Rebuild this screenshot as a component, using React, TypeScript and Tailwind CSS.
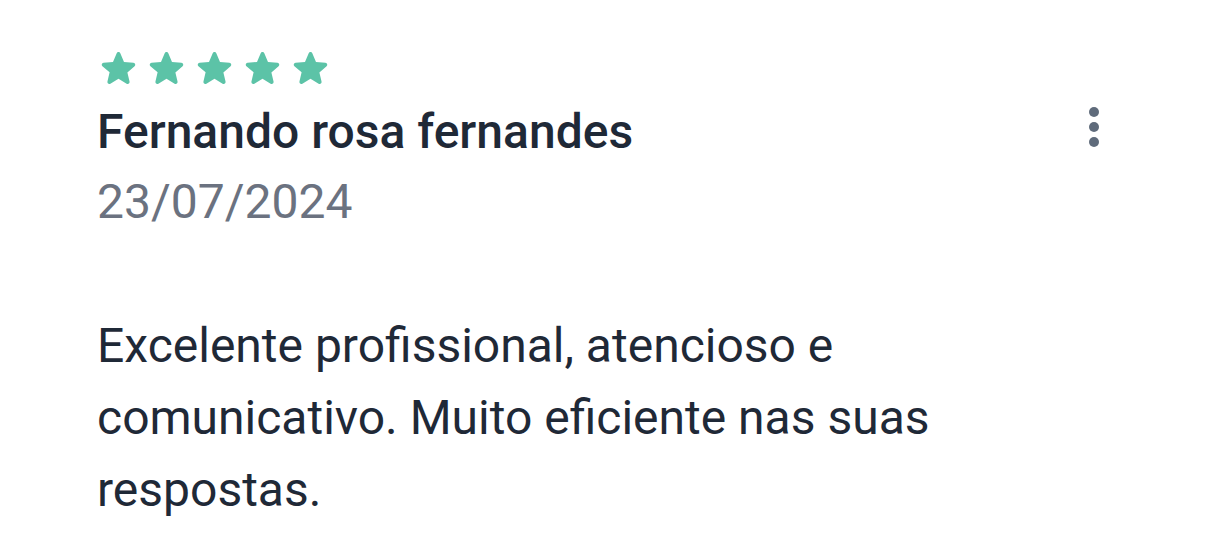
import React from "react";

const Star = () => (
  <svg width="47" height="47" viewBox="0 0 24 24" className="shrink-0">
    <path
      d="M12 17.27l4.15 2.51c.76.46 1.69-.22 1.49-1.08l-1.1-4.72 3.67-3.18c.67-.58.31-1.68-.57-1.75l-4.83-.41-1.89-4.46c-.34-.81-1.5-.81-1.84 0L9.19 8.63l-4.83.41c-.88.07-1.24 1.17-.57 1.75l3.67 3.18-1.1 4.72c-.2.86.73 1.54 1.49 1.08l4.15-2.5z"
      fill="#5cc3a7"
    />
  </svg>
);

export default function App() {
  return (
    <div
      className="w-[1220px] h-[547px] bg-white overflow-hidden"
      style={{ fontFamily: "Roboto, 'Noto Sans', sans-serif" }}
    >
      <div className="flex items-start justify-between pl-[97px] pr-[121px] pt-[45px]">
        <div className="flex flex-col">
          <div className="flex gap-[1px] -ml-[2px]">
            <Star />
            <Star />
            <Star />
            <Star />
            <Star />
          </div>
          <div className="mt-[10px] text-[48px] leading-[60px] font-medium text-[#1f2937]">
            Fernando rosa fernandes
          </div>
          <div className="mt-[10px] text-[48px] leading-[60px] text-[#6b7280]">
            23/07/2024
          </div>
        </div>
        <div className="mt-[62px] flex flex-col items-center gap-[5px]">
          <span className="block w-[10px] h-[10px] rounded-full bg-[#5f6b7b]" />
          <span className="block w-[10px] h-[10px] rounded-full bg-[#5f6b7b]" />
          <span className="block w-[10px] h-[10px] rounded-full bg-[#5f6b7b]" />
        </div>
      </div>
      <p className="pl-[97px] mt-[78px] w-[1000px] text-[48px] leading-[72px] text-[#1f2937]">
        Excelente profissional, atencioso e
        <br />
        comunicativo. Muito eficiente nas suas
        <br />
        respostas.
      </p>
    </div>
  );
}
